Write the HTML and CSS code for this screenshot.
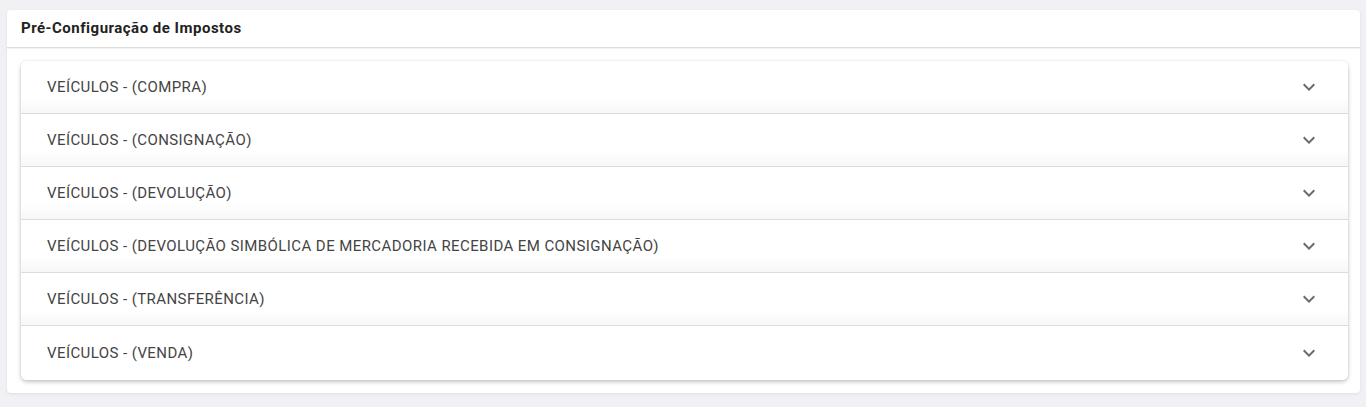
FILE: index.html
```html
<!DOCTYPE html>
<html lang="pt-BR">
<head>
  <meta charset="UTF-8" />
  <meta name="viewport" content="width=device-width, initial-scale=1.0" />
  <title>Pré-Configuração de Impostos</title>
  <link rel="stylesheet" href="styles.css">
</head>
<body>
  <div class="card">
    <div class="card-header">Pré-Configuração de Impostos</div>

    <div class="accordion">
      <div class="panel">
        <span class="panel-title">VEÍCULOS - (COMPRA)</span>
        <svg class="chevron" viewBox="0 0 24 24"><path d="M7.41 8.59 12 13.17l4.59-4.58L18 10l-6 6-6-6z"/></svg>
      </div>
      <div class="panel">
        <span class="panel-title">VEÍCULOS - (CONSIGNAÇÃO)</span>
        <svg class="chevron" viewBox="0 0 24 24"><path d="M7.41 8.59 12 13.17l4.59-4.58L18 10l-6 6-6-6z"/></svg>
      </div>
      <div class="panel">
        <span class="panel-title">VEÍCULOS - (DEVOLUÇÃO)</span>
        <svg class="chevron" viewBox="0 0 24 24"><path d="M7.41 8.59 12 13.17l4.59-4.58L18 10l-6 6-6-6z"/></svg>
      </div>
      <div class="panel">
        <span class="panel-title">VEÍCULOS - (DEVOLUÇÃO SIMBÓLICA DE MERCADORIA RECEBIDA EM CONSIGNAÇÃO)</span>
        <svg class="chevron" viewBox="0 0 24 24"><path d="M7.41 8.59 12 13.17l4.59-4.58L18 10l-6 6-6-6z"/></svg>
      </div>
      <div class="panel">
        <span class="panel-title">VEÍCULOS - (TRANSFERÊNCIA)</span>
        <svg class="chevron" viewBox="0 0 24 24"><path d="M7.41 8.59 12 13.17l4.59-4.58L18 10l-6 6-6-6z"/></svg>
      </div>
      <div class="panel">
        <span class="panel-title">VEÍCULOS - (VENDA)</span>
        <svg class="chevron" viewBox="0 0 24 24"><path d="M7.41 8.59 12 13.17l4.59-4.58L18 10l-6 6-6-6z"/></svg>
      </div>
    </div>
  </div>
</body>
</html>
```

FILE: styles.css
```css
body {
  font-family: Roboto, "Liberation Sans", Arial, sans-serif;
  margin: 0;
  padding: 10px 6px 13px 7px;
  background-color: #f0f0f5;
  color: #3c3c3c;
}
.card {
  background-color: #fff;
  border-radius: 4px;
  box-shadow: 0 1px 3px rgba(0, 0, 0, 0.08);
  padding-bottom: 13px;
}
.card-header {
  font-size: 15px;
  font-weight: 700;
  letter-spacing: 0.5px;
  color: #222;
  height: 37px;
  line-height: 37px;
  padding: 0 14px;
  border-bottom: 1px solid #dedede;
  box-shadow: 0 1px 0 #f2f2f2;
}
.accordion {
  margin: 13px 12px 0 14px;
  border-radius: 6px;
  box-shadow: 0 2px 4px rgba(0, 0, 0, 0.22), 0 0 3px rgba(0, 0, 0, 0.08);
  overflow: hidden;
}
.panel {
  display: flex;
  align-items: center;
  justify-content: space-between;
  height: 52px;
  padding: 0 30px 0 26px;
  background: linear-gradient(to bottom, #fff 70%, #f7f7f7 100%);
  border-bottom: 1px solid #dcdcdc;
}
.panel:last-child {
  border-bottom: none;
  background: #fff;
  height: 54px;
}
.panel-title {
  font-size: 15px;
  letter-spacing: 0.42px;
  color: #444;
}
.chevron {
  width: 24px;
  height: 24px;
  fill: #6b6b6b;
  margin-right: -3px;
}
```
